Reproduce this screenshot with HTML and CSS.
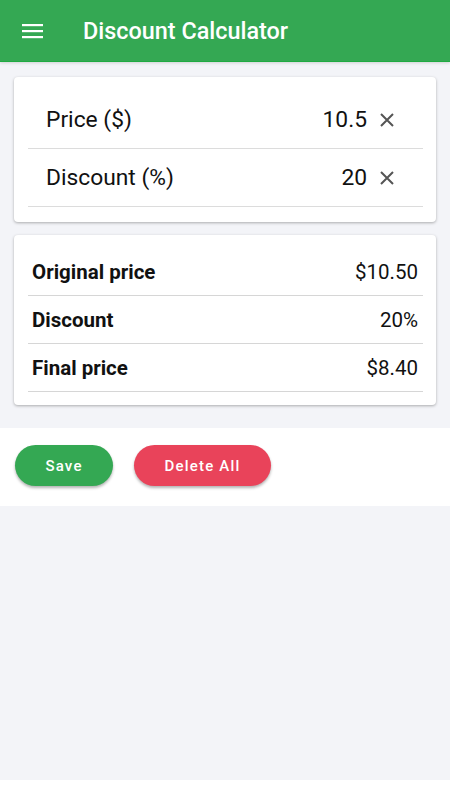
FILE: index.html
```html
<!DOCTYPE html>
<html>
<head>
<meta charset="utf-8">
<link rel="stylesheet" href="styles.css">
</head>
<body>
<div class="app">
  <header class="topbar">
    <svg class="menu" width="22" height="16" viewBox="0 0 22 16"><rect x="0" y="1" width="21" height="2.2" fill="#fff"/><rect x="0" y="7" width="21" height="2.2" fill="#fff"/><rect x="0" y="13" width="21" height="2.2" fill="#fff"/></svg>
    <h1 class="title">Discount Calculator</h1>
  </header>
  <main class="content">
    <section class="card inputs">
      <div class="input-row">
        <span class="input-label">Price ($)</span>
        <span class="input-value">10.5</span>
        <svg class="clear" width="16" height="16" viewBox="0 0 16 16"><path d="M2 2 L14 14 M14 2 L2 14" stroke="#555" stroke-width="2" fill="none"/></svg>
      </div>
      <div class="input-row">
        <span class="input-label">Discount (%)</span>
        <span class="input-value">20</span>
        <svg class="clear" width="16" height="16" viewBox="0 0 16 16"><path d="M2 2 L14 14 M14 2 L2 14" stroke="#555" stroke-width="2" fill="none"/></svg>
      </div>
    </section>
    <section class="card results">
      <div class="result-row"><span class="result-label">Original price</span><span class="result-value">$10.50</span></div>
      <div class="result-row"><span class="result-label">Discount</span><span class="result-value">20%</span></div>
      <div class="result-row"><span class="result-label">Final price</span><span class="result-value">$8.40</span></div>
    </section>
    <div class="actions">
      <button class="btn save">Save</button>
      <button class="btn delete">Delete All</button>
    </div>
  </main>
</div>
</body>
</html>
```
FILE: styles.css
```css
* { box-sizing: border-box; }
html, body { margin: 0; padding: 0; background: #fff; }
body { font-family: Roboto, "Noto Sans", sans-serif; color: #111; }
.app { height: 780px; display: flex; flex-direction: column; background: #f3f4f8; }
.topbar {
  height: 62px; background: #34a853; border-bottom: 1px solid #1faa42;
  display: flex; align-items: center; padding-left: 22px;
  box-shadow: 0 1px 3px rgba(0,0,0,0.15);
}
.menu { display: block; margin-top: 1px; }
.title { margin: 0 0 0 39px; font-size: 23.4px; font-weight: 500; color: #fff; }
.content { display: flex; flex-direction: column; padding-top: 15px; }
.card {
  margin: 0 14px; background: #fff; border-radius: 4px;
  box-shadow: 0 1px 3px rgba(0,0,0,0.3);
  padding: 0 13px 14px 14px;
}
.inputs { padding-top: 14px; padding-bottom: 15px; }
.input-row {
  height: 58px; display: flex; align-items: center;
  border-bottom: 1px solid #dcdcdc; padding: 0 28px 0 18px;
  font-size: 22.8px;
}
.input-label { flex: 1; }
.input-value { margin-right: 12px; }
.clear { display: block; }
.results { margin-top: 13px; padding-top: 13px; padding-bottom: 13px; }
.result-row {
  height: 48px; display: flex; align-items: center; justify-content: space-between;
  border-bottom: 1px solid #d6d6d6; padding: 0 5px 0 4px; font-size: 20.5px;
}
.result-label { font-weight: 700; }
.actions {
  margin-top: 23px; background: #fff; height: 78px;
  display: flex; align-items: flex-start; gap: 21px; padding: 17px 0 0 15px;
}
.btn {
  height: 41px; border: none; border-radius: 21px; color: #fff;
  font-family: Roboto, sans-serif; font-size: 15px; font-weight: 500; letter-spacing: 1.2px;
  box-shadow: 0 2px 3px rgba(0,0,0,0.3);
}
.save { width: 98px; background: #34a853; }
.delete { width: 137px; background: #e9435a; }
```
